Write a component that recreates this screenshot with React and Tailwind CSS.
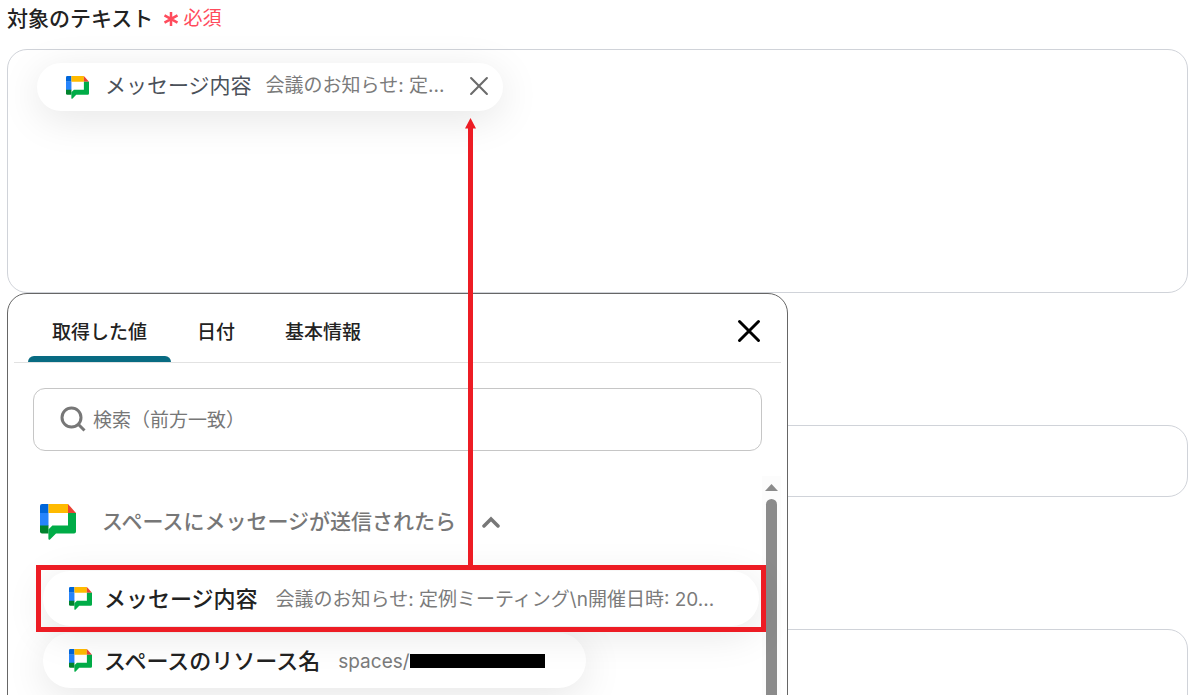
import { useState } from 'react';

const TABS = ['取得した値', '日付', '基本情報'];

export default function App() {
  return (
    <div className="h-screen overflow-hidden bg-white pl-[7px] pr-1 font-['Inter','Noto_Sans_CJK_JP',sans-serif] text-[#222]">
      <div className="flex h-[49px] items-start gap-2.5 pt-[5px]">
        <span id="target-label" className="text-[21px] leading-7 font-medium">対象のテキスト</span>
        <span className="flex items-center gap-1 text-[19px] leading-7 text-[#ff4b5c]">
          <RequiredMark />
          必須
        </span>
      </div>

      <div className="relative">
        <div
          role="group"
          aria-labelledby="target-label"
          className="h-[244px] rounded-[20px] border border-[#d0d3d9] px-[29px] py-[13px]"
        >
          <Chip label="メッセージ内容" value="会議のお知らせ: 定..." />
        </div>
        <ValuePicker />
      </div>

      <input
        aria-label="入力"
        className="mt-[132px] block h-[72px] w-full rounded-[20px] border border-[#d0d3d9] px-7 outline-none"
      />
      <textarea
        aria-label="補足"
        className="mt-[132px] block h-[244px] w-full resize-none rounded-[20px] border border-[#d0d3d9] px-7 outline-none"
      />
    </div>
  );
}

function Chip({ label, value }) {
  return (
    <div className="flex h-12 w-[466px] items-center rounded-full bg-white pr-3 pb-0.5 pl-[29px] shadow-[0_8px_40px_rgba(0,0,0,0.1)]">
      <ChatLogo className="mt-0.5 h-[23px] w-[23px] shrink-0" />
      <span className="ml-4 text-[21px] leading-7 whitespace-nowrap text-[#4b5159]">{label}</span>
      <span className="ml-3.5 text-[19px] leading-7 whitespace-nowrap text-[#7b7b7b]">{value}</span>
      <button type="button" aria-label="削除" className="ml-auto flex h-6 w-6 items-center justify-center text-[#6b6b6b]">
        <CrossIcon className="h-5 w-5" strokeWidth={2.5} />
      </button>
    </div>
  );
}

// Panel that opens under the editor and lists the values that can be inserted
function ValuePicker() {
  const [tab, setTab] = useState(TABS[0]);

  return (
    <div className="absolute top-full left-0 h-[640px] w-[781px] max-w-full rounded-t-[20px] border border-[#666] bg-white">
      <div className="mx-1.5 flex h-[69px] gap-0.5 border-b border-[#e2e2e2] pl-3.5 pr-5">
        {TABS.map((name) => (
          <button
            key={name}
            type="button"
            onClick={() => setTab(name)}
            className="flex flex-col justify-between text-[19px] leading-7 font-medium"
          >
            <span className="px-6 pt-[25px]">{name}</span>
            {tab === name && <span className="h-1.5 w-full rounded-t-md bg-[#086b82]" />}
          </button>
        ))}
        <button type="button" aria-label="閉じる" className="mt-[25px] ml-auto h-6 w-6 text-black">
          <CrossIcon className="h-6 w-6" strokeWidth={3} />
        </button>
      </div>

      <label className="mx-[25px] mt-[25px] flex h-[63px] items-center gap-[7px] rounded-xl border border-[#c6c6c6] px-[26px]">
        <SearchIcon />
        <input
          type="text"
          aria-label="検索"
          placeholder="検索（前方一致）"
          className="w-full bg-transparent pt-0.5 text-[19px] leading-7 outline-none placeholder:text-[#777]"
        />
      </label>

      <div className="mt-[25px] mr-1.5 ml-8 flex h-full">
        <div className="min-w-0 flex-1 pt-7">
          <button type="button" className="flex h-9 items-center text-[#777]">
            <ChatLogo className="h-9 w-9" />
            <span className="ml-[26px] text-[21px] leading-7 font-medium whitespace-nowrap">スペースにメッセージが送信されたら</span>
            <ChevronUp />
          </button>

          <ul className="mt-[31px] mr-[3px] ml-[3px] flex flex-col items-start gap-[7px]">
            <li className="relative w-full">
              <ValueItem label="メッセージ内容" className="w-full">
                会議のお知らせ: 定例ミーティング\n開催日時: 20...
              </ValueItem>
              <Highlight />
            </li>
            <li>
              <ValueItem label="スペースのリソース名" className="w-[543px]">
                spaces/
                <span className="mb-0.5 h-3.5 w-[135px] bg-black" />
              </ValueItem>
            </li>
          </ul>
        </div>
        <ScrollBar />
      </div>
    </div>
  );
}

function ValueItem({ label, className, children }) {
  return (
    <button
      type="button"
      className={`flex h-[55px] items-center rounded-full bg-white pl-[26px] text-left shadow-[0_8px_40px_rgba(0,0,0,0.1)] ${className}`}
    >
      <ChatLogo className="h-[23px] w-[23px] shrink-0" />
      <span className="ml-3 text-[22px] leading-7 font-medium whitespace-nowrap">{label}</span>
      <span className="ml-[18px] flex items-center pt-0.5 text-[19px] leading-7 whitespace-nowrap text-[#7b7b7b]">{children}</span>
    </button>
  );
}

// Red frame round the picked value, with an arrow up to its chip
function Highlight() {
  return (
    <div className="pointer-events-none absolute -inset-x-[7px] -inset-y-[6px] border-[5px] border-[#ed1c24]">
      <svg className="absolute bottom-full left-[424px] h-[452px] w-[11px]" viewBox="0 0 11 452" fill="#ed1c24">
        <path d="M5.5 0 11 10.5H8V452H3V10.5H0z" />
      </svg>
    </div>
  );
}

function ScrollBar() {
  return (
    <div className="flex w-[19px] flex-col items-center bg-[#fcfcfc] pt-2 text-[#8b8b8b]">
      <svg className="h-[7px] w-[13px] shrink-0" viewBox="0 0 13 7" fill="currentColor">
        <path d="M6.5 0 13 7H0z" />
      </svg>
      <div className="mt-2 w-[11px] flex-1 rounded-full bg-[#8b8b8b]" />
    </div>
  );
}

function ChatLogo({ className }) {
  return (
    <svg className={className} viewBox="0 0 36 36">
      <path fill="#0066da" d="M2 0h6.5v9H0V2a2 2 0 0 1 2-2z" />
      <path fill="#2684fc" d="M0 9h8.5v13H0z" />
      <path fill="#ffba00" d="M8.5 0H28v9H8.5z" />
      <path fill="#ea4335" d="M28 0l8 9h-8z" />
      <path fill="#00832d" d="M0 21.5h8.5v8H2a2 2 0 0 1-2-2z" />
      <path fill="#00ac47" d="M28 9h8v18.5a2 2 0 0 1-2 2H16l-6 6c-.7.6-1.6.2-1.6-.7V25.5l4-4H28z" />
    </svg>
  );
}

function CrossIcon({ className, strokeWidth }) {
  return (
    <svg className={className} viewBox="0 0 24 24" fill="none" stroke="currentColor" strokeWidth={strokeWidth} strokeLinecap="round">
      <path d="M2.5 2.5l19 19M21.5 2.5l-19 19" />
    </svg>
  );
}

function SearchIcon() {
  return (
    <svg className="mb-0.5 h-[26px] w-[26px] shrink-0 text-[#777]" viewBox="0 0 26 26" fill="none" stroke="currentColor" strokeWidth="3">
      <circle cx="11.5" cy="11.5" r="9.5" />
      <path d="M18 18l6.5 6.5" />
    </svg>
  );
}

function ChevronUp() {
  return (
    <svg className="ml-[26px] h-3 w-[18px]" viewBox="0 0 18 12" fill="none" stroke="currentColor" strokeWidth="3.5" strokeLinecap="round">
      <path d="M2 10L9 3l7 7" />
    </svg>
  );
}

function RequiredMark() {
  return (
    <svg className="h-4 w-4" viewBox="0 0 16 16" fill="none" stroke="currentColor" strokeWidth="2.5">
      <path d="M8 1v14M1.5 4.3l13 7.4M14.5 4.3l-13 7.4" />
    </svg>
  );
}
